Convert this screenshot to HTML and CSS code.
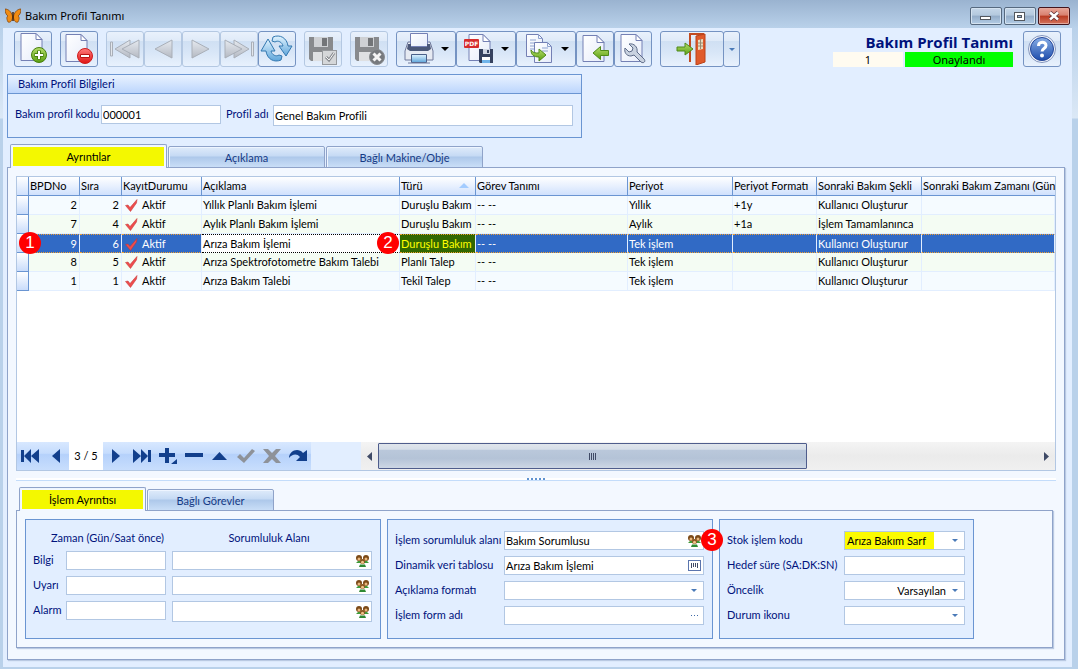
FILE: index.html
```
<!DOCTYPE html>
<html lang="tr">
<head>
  <meta charset="UTF-8">
  <meta name="viewport" content="width=device-width, initial-scale=1.0">
  <title>Bakım Profil Tanımı</title>
  <link rel="stylesheet" href="styles.css">
</head>
<body>
  <!-- shared icons and gradients -->
  <svg class="sprite" width="0" height="0" aria-hidden="true">
    <defs>
      <linearGradient id="g-gray" x1="0" y1="0" x2="0" y2="1"><stop offset="0" stop-color="#e6eaf0"/><stop offset="1" stop-color="#b4b9c2"/></linearGradient>
      <linearGradient id="g-green" x1="0" y1="0" x2="0" y2="1"><stop offset="0" stop-color="#b5de6b"/><stop offset="1" stop-color="#5a9e10"/></linearGradient>
      <linearGradient id="g-red" x1="0" y1="0" x2="0" y2="1"><stop offset="0" stop-color="#ff7b7b"/><stop offset="1" stop-color="#e01414"/></linearGradient>
      <linearGradient id="g-blue" x1="0" y1="0" x2="0" y2="1"><stop offset="0" stop-color="#e2f4ff"/><stop offset="1" stop-color="#5ea5da"/></linearGradient>
      <linearGradient id="g-help" x1="0" y1="0" x2="0" y2="1"><stop offset="0" stop-color="#88aee6"/><stop offset="1" stop-color="#1d4cab"/></linearGradient>
      <linearGradient id="g-page" x1="0" y1="0" x2="1" y2="1"><stop offset="0" stop-color="#ffffff"/><stop offset="1" stop-color="#e6ecfa"/></linearGradient>
    </defs>
    <symbol id="i-tri" viewBox="0 0 32 32">
      <path d="M25 7v18L8 16z" fill="url(#g-gray)" stroke="#a9afb8"/>
    </symbol>
    <symbol id="i-first" viewBox="0 0 32 32">
      <path d="M1.500 9h2v14h-2z" fill="#e2e6ec" stroke="#a9afb8"/>
      <path d="M21 7v18L6 16z" fill="url(#g-gray)" stroke="#a9afb8"/>
      <path d="M30 7v18L13 16z" fill="url(#g-gray)" stroke="#a9afb8"/>
    </symbol>
    <symbol id="i-floppy" viewBox="0 0 32 32">
      <path d="M2 4h24v24H4l-2-2z" fill="#888a8d"/>
      <path d="M7 4h14v10H7z" fill="#cfd1d4"/><path d="M15 5h5v8h-5z" fill="#737578"/>
      <path d="M6 19h16v9H6z" fill="#dfe0e2"/>
    </symbol>
    <symbol id="i-people" viewBox="0 0 13 12">
      <path d="M0 8l2-2h3l1 2zM7 8l1-2h3l2 2z" fill="#3f9a3a"/>
      <circle cx="3" cy="3" r="3" fill="#7c4a18"/><circle cx="3" cy="4" r="1.500" fill="#e9b77c"/>
      <circle cx="10" cy="3" r="3" fill="#7c4a18"/><circle cx="10" cy="4" r="1.500" fill="#e9b77c"/>
      <circle cx="6.500" cy="6.500" r="2.500" fill="#8b561f"/><circle cx="6.500" cy="7.300" r="1.500" fill="#f0c48c"/>
      <path d="M3 12l1-2.500h5l1 2.500z" fill="#2f8a34"/>
    </symbol>
    <symbol id="i-check" viewBox="0 0 13 13">
      <path d="M.5 6.500l2.500-.5 2 2.500 7-8-.5 3.500-6 8.500z" fill="#ee4d4d" stroke="#c03030" stroke-width=".5"/>
    </symbol>
    <symbol id="i-arrow" viewBox="0 0 18 14">
      <path d="M1 5h8V1l8 6-8 6V9H1z" fill="url(#g-green)" stroke="#4e8a1a"/>
    </symbol>
  </svg>

  <div class="window">
    <header class="titlebar">
      <svg class="logo" width="16" height="16" viewBox="0 0 16 16">
        <path d="M7.500 8C6 3 3 1 0 1c0 3 1 6 3 7-2 1-1 4 0 6 2 1 4-1 4.500-4z" fill="#f08c14" stroke="#7a3c05" stroke-width=".7"/>
        <path d="M8.500 8C10 3 13 1 16 1c0 3-1 6-3 7 2 1 1 4 0 6-2 1-4-1-4.500-4z" fill="#f08c14" stroke="#7a3c05" stroke-width=".7"/>
        <path d="M8 4v9" stroke="#4a2505" stroke-width="1.500"/>
      </svg>
      <h1>Bakım Profil Tanımı</h1>
      <div class="window-buttons">
        <button type="button" aria-label="Küçült"><svg width="30" height="16" viewBox="0 0 30 16"><rect x="9.500" y="8.500" width="10" height="3" fill="#fff" stroke="#53585f"/></svg></button>
        <button type="button" aria-label="Büyüt"><svg width="30" height="16" viewBox="0 0 30 16"><rect x="9.500" y="4.500" width="10" height="8" fill="#fff" stroke="#53585f"/><rect x="12.500" y="7.500" width="4" height="2" fill="#9db5d3" stroke="#53585f"/></svg></button>
        <button type="button" class="close" aria-label="Kapat"><svg width="30" height="16" viewBox="0 0 30 16"><path d="M11 4.500l8 7M19 4.500l-8 7" stroke="#5a3038" stroke-width="4"/><path d="M11 4.500l8 7M19 4.500l-8 7" stroke="#fff" stroke-width="2.500"/></svg></button>
      </div>
    </header>

    <main class="content">
      <div class="toolbar">
        <button type="button" class="tool" aria-label="Yeni"><svg width="32" height="32" viewBox="0 0 32 32"><path d="M4 .5h15l6 6v21H4z" fill="url(#g-page)" stroke="#7480b4"/><path d="M19 .5v6h6z" fill="#fff" stroke="#7480b4"/><circle cx="22" cy="22" r="7.500" fill="url(#g-green)" stroke="#47800f"/><path d="M22 17.500v9M17.500 22h9" stroke="#47800f" stroke-width="4"/><path d="M22 18v8M18 22h8" stroke="#fff" stroke-width="2"/></svg></button>
        <button type="button" class="tool gap" aria-label="Sil"><svg width="32" height="32" viewBox="0 0 32 32"><path d="M3 1.500h15l6 6v21H3z" fill="url(#g-page)" stroke="#7480b4"/><path d="M18 1.500v6h6z" fill="#fff" stroke="#7480b4"/><circle cx="22" cy="23" r="7.500" fill="url(#g-red)" stroke="#d01c1c"/><path d="M17.500 21.500h9v3h-9z" fill="#fff" stroke="#b81414"/></svg></button>
        <button type="button" class="tool gap" disabled aria-label="İlk"><svg width="32" height="32"><use href="#i-first"/></svg></button>
        <button type="button" class="tool" disabled aria-label="Önceki"><svg width="32" height="32"><use href="#i-tri"/></svg></button>
        <button type="button" class="tool" disabled aria-label="Sonraki"><svg class="flip" width="32" height="32"><use href="#i-tri"/></svg></button>
        <button type="button" class="tool" disabled aria-label="Son"><svg class="flip" width="32" height="32"><use href="#i-first"/></svg></button>
        <button type="button" class="tool" aria-label="Yenile"><svg width="34" height="32" viewBox="0 0 34 32"><g fill="url(#g-blue)" stroke="#3378b0" stroke-linejoin="round"><path d="M13 4c7-3 14 1 15 9l4 0-6 10-7-10h4c-1-4-5-6-8-4l-3-1z"/><path d="M21 27c-7 3-14-1-15-9H1L8 6l7 12h-4c1 4 5 6 8 4l3 1z"/></g></svg></button>
        <button type="button" class="tool gap" disabled aria-label="Kaydet"><svg width="32" height="32" viewBox="0 0 32 32"><use href="#i-floppy"/><rect x="15.500" y="17.500" width="14" height="14" fill="#d5d7d9" stroke="#96999d"/><path d="M19 24l3 3 5-7" fill="none" stroke="#888b90" stroke-width="3"/><path d="M19 24l3 3 5-7" fill="none" stroke="#f6f6f6"/></svg></button>
        <button type="button" class="tool gap" disabled aria-label="İptal"><svg width="32" height="32" viewBox="0 0 32 32"><use href="#i-floppy"/><circle cx="24" cy="24" r="7.500" fill="#777a7e" stroke="#898c90"/><path d="M20.500 20.500l7 7M27.500 20.500l-7 7" stroke="#f4f4f4" stroke-width="3"/></svg></button>
        <button type="button" class="tool wide gap" aria-label="Yazdır"><svg width="32" height="32" viewBox="0 0 32 32"><path d="M5 9h22l3 9v9H2v-9z" fill="#e6eaf2" stroke="#707a9c"/><path d="M7.500.5h17v13h-17z" fill="url(#g-page)" stroke="#7480b4"/><path d="M5 11h3v3h16v-3h3l1 5-3 2H7l-3-2z" fill="#4b5878"/><path d="M8.500 21.500h15v8h-15z" fill="url(#g-blue)" stroke="#4a5f88"/><path d="M5 30h22" stroke="#707a9c"/></svg><i class="caret"></i></button>
        <button type="button" class="tool wide" aria-label="PDF kaydet"><svg width="32" height="32" viewBox="0 0 32 32"><path d="M6 1.500h14l7 7v19H6z" fill="url(#g-page)" stroke="#7480b4"/><path d="M20 1.500v7h7z" fill="#fff" stroke="#7480b4"/><rect x="1" y="6" width="15" height="9" rx="1" fill="#d62c2c"/><text x="8.500" y="13" text-anchor="middle" class="pdf">PDF</text><path d="M16 16h14v14H17l-1-1z" fill="#36425f"/><path d="M20 16h7v5h-7z" fill="#cfd6e4"/><path d="M24 17h2v3h-2z" fill="#36425f"/><path d="M19 24h8v6h-8z" fill="#fff"/><path d="M19 27h8v3h-8z" fill="#6fb4ea"/></svg><i class="caret"></i></button>
        <button type="button" class="tool wide" aria-label="Kopyala"><svg width="32" height="32" viewBox="0 0 32 32"><path d="M3.500 1.500h12l4 4v18h-16z" fill="url(#g-page)" stroke="#7480b4"/><path d="M15.500 1.500v4h4M7 7h6M7 10h8M7 13h8M7 16h4" fill="none" stroke="#8fa3d0"/><path d="M11.500 9.500h13l4 4v16h-17z" fill="url(#g-page)" stroke="#7480b4"/><path d="M24.500 9.500v4h4M19 15h6M19 18h6" fill="none" stroke="#8fa3d0"/><path d="M8 17c2 3 4 3 8 3v-4l7 6-7 6v-4c-5 0-8-2-8-7z" fill="url(#g-green)" stroke="#4e8a1a"/></svg><i class="caret"></i></button>
        <button type="button" class="tool" aria-label="Geri aktar"><svg width="32" height="32" viewBox="0 0 32 32"><path d="M4 2.500h14l7 7v19H4z" fill="url(#g-page)" stroke="#7480b4"/><path d="M18 2.500v7h7z" fill="#fff" stroke="#7480b4"/><path d="M29.500 17.500h-8v-4L14 20l7.500 6.500v-4h8z" fill="url(#g-green)" stroke="#4e8a1a"/></svg></button>
        <button type="button" class="tool" aria-label="Ayarlar"><svg width="32" height="32" viewBox="0 0 32 32"><path d="M4 1.500h15l6 6v21H4z" fill="url(#g-page)" stroke="#7480b4"/><path d="M19 1.500v6h6z" fill="#fff" stroke="#7480b4"/><path d="M12 11l4 4-1 3-3 1-4-4c-1 4 1 8 6 8l3-1 7 7c3 2 5-1 3-3l-7-7c1-5-3-9-8-8z" fill="#c9d2e0" stroke="#5d6b88"/></svg></button>
        <button type="button" class="tool exit gap" aria-label="Çıkış"><svg width="32" height="32" viewBox="0 0 32 32"><path d="M14 29V1h14" fill="none" stroke="#c24a20" stroke-width="2"/><path d="M20 3l9-2v28l-9 3z" fill="#e05a2b" stroke="#b9431a"/><path d="M22 7l5-1v10l-5 1z" fill="#e9dcc0"/><path d="M24.500 6v10M22 10h5M22 13h5" stroke="#9a8a70"/><use href="#i-arrow" x="0" y="9" width="18" height="14"/></svg></button>
        <button type="button" class="tool drop" aria-label="Çıkış seçenekleri"><i class="caret small"></i></button>

        <div class="doc-info">
          <strong>Bakım Profil Tanımı</strong>
          <div class="status">
            <span class="number">1</span>
            <span class="approved">Onaylandı</span>
          </div>
        </div>
        <button type="button" class="tool" aria-label="Yardım"><svg width="32" height="32" viewBox="0 0 32 32"><circle cx="16" cy="16" r="13.500" fill="#f4f7fc" stroke="#8294bd"/><circle cx="16" cy="16" r="11.500" fill="url(#g-help)" stroke="#24479a"/><path d="M12.500 13c0-5 7.500-5 7.500-.5 0 3-4 3-4 6" fill="none" stroke="#fff" stroke-width="3"/><circle cx="16" cy="22.500" r="2" fill="#fff"/></svg></button>
      </div>

      <section class="profile">
        <h2>Bakım Profil Bilgileri</h2>
        <div class="profile-fields">
          <label for="kod">Bakım profil kodu</label>
          <input class="box code" type="text" id="kod" value="000001">
          <label for="ad">Profil adı</label>
          <input class="box name" type="text" id="ad" value="Genel Bakım Profili">
        </div>
      </section>

      <nav class="tabs">
        <button type="button" class="tab active"><span>Ayrıntılar</span></button>
        <button type="button" class="tab">Açıklama</button>
        <button type="button" class="tab">Bağlı Makine/Obje</button>
      </nav>
      <section class="page">
        <div class="grid">
          <table>
            <colgroup>
              <col class="c-mark"><col class="c-no"><col class="c-order"><col class="c-state"><col class="c-desc"><col class="c-type">
              <col class="c-task"><col class="c-period"><col class="c-format"><col class="c-next"><col>
            </colgroup>
            <thead>
              <tr>
                <th></th><th>BPDNo</th><th>Sıra</th><th>KayıtDurumu</th><th>Açıklama</th><th class="sorted">Türü</th>
                <th>Görev Tanımı</th><th>Periyot</th><th>Periyot Formatı</th><th>Sonraki Bakım Şekli</th><th>Sonraki Bakım Zamanı (Gün</th>
              </tr>
            </thead>
            <tbody>
              <tr>
                <td></td><td class="num">2</td><td class="num">2</td><td><svg class="check" width="13" height="13"><use href="#i-check"/></svg>Aktif</td><td>Yıllık Planlı Bakım İşlemi</td><td>Duruşlu Bakım</td>
                <td>-- --</td><td>Yıllık</td><td>+1y</td><td>Kullanıcı Oluşturur</td><td></td>
              </tr>
              <tr>
                <td></td><td class="num">7</td><td class="num">4</td><td><svg class="check" width="13" height="13"><use href="#i-check"/></svg>Aktif</td><td>Aylık Planlı Bakım İşlemi</td><td>Duruşlu Bakım</td>
                <td>-- --</td><td>Aylık</td><td>+1a</td><td>İşlem Tamamlanınca</td><td></td>
              </tr>
              <tr class="selected">
                <td class="anchor"><b class="badge mark-one">1</b></td><td class="num">9</td><td class="num">6</td><td><svg class="check" width="13" height="13"><use href="#i-check"/></svg>Aktif</td><td class="focused">Arıza Bakım İşlemi</td><td class="anchor marked">Duruşlu Bakım<b class="badge mark-two">2</b></td>
                <td>-- --</td><td>Tek işlem</td><td></td><td>Kullanıcı Oluşturur</td><td></td>
              </tr>
              <tr>
                <td></td><td class="num">8</td><td class="num">5</td><td><svg class="check" width="13" height="13"><use href="#i-check"/></svg>Aktif</td><td>Arıza Spektrofotometre Bakım Talebi</td><td>Planlı Talep</td>
                <td>-- --</td><td>Tek işlem</td><td></td><td>Kullanıcı Oluşturur</td><td></td>
              </tr>
              <tr>
                <td></td><td class="num">1</td><td class="num">1</td><td><svg class="check" width="13" height="13"><use href="#i-check"/></svg>Aktif</td><td>Arıza Bakım Talebi</td><td>Tekil Talep</td>
                <td>-- --</td><td>Tek işlem</td><td></td><td>Kullanıcı Oluşturur</td><td></td>
              </tr>
            </tbody>
          </table>

          <div class="grid-footer">
            <div class="navigator">
              <button type="button" aria-label="İlk kayıt"><svg width="20" height="16" viewBox="0 0 20 16"><path d="M1 2h3v12H1zM11 1v14L4 8zM19 1v14l-8-7z"/></svg></button>
              <button type="button" aria-label="Önceki kayıt"><svg width="20" height="16" viewBox="0 0 20 16"><path d="M14 1v14L6 8z"/></svg></button>
              <span class="position">3 / 5</span>
              <button type="button" aria-label="Sonraki kayıt"><svg width="20" height="16" viewBox="0 0 20 16"><path d="M6 1v14l8-7z"/></svg></button>
              <button type="button" aria-label="Son kayıt"><svg width="20" height="16" viewBox="0 0 20 16"><path d="M16 2h3v12h-3zM9 1v14l7-7zM1 1v14l8-7z"/></svg></button>
              <button type="button" aria-label="Ekle"><svg width="20" height="16" viewBox="0 0 20 16"><path d="M1 5h6V0h4v5h6v4h-6v6H7V9H1zM19 11v5h-6z"/></svg></button>
              <button type="button" aria-label="Çıkar"><svg width="20" height="16" viewBox="0 0 20 16"><path d="M1 5h18v4H1z"/></svg></button>
              <button type="button" aria-label="Düzenle"><svg width="20" height="16" viewBox="0 0 20 16"><path d="M2 12h15L9.500 4z"/></svg></button>
              <button type="button" disabled aria-label="Onayla"><svg width="20" height="16" viewBox="0 0 20 16"><path d="M1 9l3-3 4 4 8-9 3 2L8 15z"/></svg></button>
              <button type="button" disabled aria-label="Vazgeç"><svg width="20" height="16" viewBox="0 0 20 16"><path d="M1 1h5l4 4 4-4h5l-6 7 6 7h-5l-4-4-4 4H1l6-7z"/></svg></button>
              <button type="button" aria-label="Yenile"><svg width="20" height="16" viewBox="0 0 20 16"><path d="M1 10C1 3 10-1 15 5l4-3v11H8l4-4C9 5 4 6 1 10z"/></svg></button>
            </div>
            <div class="scrollbar">
              <button type="button" aria-label="Sola kaydır"><svg width="5" height="9" viewBox="0 0 5 9"><path d="M5 0v9L0 4.500z" fill="#3f4a66"/></svg></button>
              <div class="track"><div class="thumb"><i></i><i></i><i></i><i></i></div></div>
              <button type="button" aria-label="Sağa kaydır"><svg width="5" height="9" viewBox="0 0 5 9"><path d="M0 0v9l5-4.500z" fill="#3f4a66"/></svg></button>
            </div>
          </div>
        </div>

        <div class="splitter"><i></i><i></i><i></i><i></i><i></i></div>

        <nav class="tabs sub">
          <button type="button" class="tab active"><span>İşlem Ayrıntısı</span></button>
          <button type="button" class="tab">Bağlı Görevler</button>
        </nav>
        <div class="detail">
          <fieldset class="notify">
            <span class="head time">Zaman (Gün/Saat önce)</span>
            <span class="head">Sorumluluk Alanı</span>

            <label for="bilgi">Bilgi</label>
            <input class="box" type="text" id="bilgi">
            <div class="box field"><input type="text" aria-label="Bilgi sorumluluk alanı"><button type="button" aria-label="Seç"><svg width="13" height="12"><use href="#i-people"/></svg></button></div>

            <label for="uyari">Uyarı</label>
            <input class="box" type="text" id="uyari">
            <div class="box field"><input type="text" aria-label="Uyarı sorumluluk alanı"><button type="button" aria-label="Seç"><svg width="13" height="12"><use href="#i-people"/></svg></button></div>

            <label for="alarm">Alarm</label>
            <input class="box" type="text" id="alarm">
            <div class="box field tall"><input type="text" aria-label="Alarm sorumluluk alanı"><button type="button" aria-label="Seç"><svg width="13" height="12"><use href="#i-people"/></svg></button></div>
          </fieldset>

          <fieldset class="form task">
            <label for="sorumlu">İşlem sorumluluk alanı</label>
            <div class="box field anchor"><input type="text" id="sorumlu" value="Bakım Sorumlusu"><button type="button" aria-label="Seç"><svg width="13" height="12"><use href="#i-people"/></svg></button><b class="badge mark-three">3</b></div>

            <label for="tablo">Dinamik veri tablosu</label>
            <div class="box field"><input type="text" id="tablo" value="Arıza Bakım İşlemi"><button type="button" aria-label="Tablo seç"><svg width="13" height="11" viewBox="0 0 13 11"><rect x=".5" y=".5" width="12" height="10" fill="#fff" stroke="#5b75ae"/><path d="M3.500 3v5M5.500 3v4M7.500 3v4M9.500 3v5" stroke="#3f4a66"/></svg></button></div>

            <label for="format">Açıklama formatı</label>
            <div class="box combo"><select id="format"><option></option></select></div>

            <label for="form">İşlem form adı</label>
            <div class="box field"><input type="text" id="form"><button type="button" class="dots" aria-label="Gözat"><i></i><i></i><i></i></button></div>
          </fieldset>

          <fieldset class="form stock">
            <label for="stok">Stok işlem kodu</label>
            <div class="box combo"><select id="stok" class="highlight"><option>Arıza Bakım Sarf</option></select></div>

            <label for="sure">Hedef süre (SA:DK:SN)</label>
            <input class="box" type="text" id="sure">

            <label for="oncelik">Öncelik</label>
            <div class="box combo"><select id="oncelik" class="right"><option>Varsayılan</option></select></div>

            <label for="ikon">Durum ikonu</label>
            <div class="box combo"><select id="ikon"><option></option></select></div>
          </fieldset>
        </div>
      </section>
    </main>
  </div>
</body>
</html>
```
FILE: styles.css
```
* {
  box-sizing: border-box;
}

body {
  margin: 0;
  font-family: Lato, "Noto Sans", sans-serif;
  font-size: 11px;
  line-height: 14px;
  color: #000;
}

button,
input,
select {
  font: inherit;
  color: inherit;
  margin: 0;
  padding: 0;
}

button {
  cursor: pointer;
}

svg {
  display: block;
}

.sprite {
  position: absolute;
}

/* window frame */
.window {
  display: flex;
  flex-direction: column;
  min-height: 100vh;
  padding: 0 6px 2px 3px;
  background: linear-gradient(#9ab3d0, #b9d1ea 28px, #dbe8f6 118px, #b9d1ea 119px);
}

.titlebar {
  display: flex;
  align-items: center;
  height: 28px;
  padding: 4px 0 0 2px;
}

.titlebar h1 {
  margin: 0 auto 0 4px;
  font-family: "Noto Sans", "Open Sans", sans-serif;
  font-size: 11px;
  font-weight: normal;
  line-height: 16px;
}

.window-buttons {
  display: flex;
  gap: 2px;
  padding-right: 2px;
}

.window-buttons button {
  height: 18px;
  width: 32px;
  border: 1px solid #56697f;
  border-radius: 2px;
  background: linear-gradient(#c6d7e9, #b4c9de 45%, #93acc8 50%, #b4cde6);
  box-shadow: inset 0 0 0 1px #d4e2f0;
}

.window-buttons .close {
  border-color: #43141c;
  background: linear-gradient(#e8a598, #d8806f 45%, #b93a22 50%, #d4735c);
  box-shadow: inset 0 0 0 1px #e3a79b;
}

.content {
  display: flex;
  flex-direction: column;
  flex: 1;
  padding: 3px 7px 7px 4px;
  background: #e2eeff;
}

/* toolbar */
.toolbar {
  display: flex;
  padding: 0 4px 0 7px;
}

.tool {
  display: flex;
  flex: none;
  align-items: center;
  justify-content: center;
  width: 38px;
  height: 36px;
  border: 1px solid #7593c2;
  border-radius: 3px;
  background: linear-gradient(#e9f1fc, #dfeaf8 26%, #d0e0f3 28%, #d8e6f7 60%, #e8f1fd);
}

.tool:disabled {
  border-color: #b4c8e2;
}

.gap {
  margin-left: 8px;
}

.wide {
  width: 60px;
  justify-content: flex-start;
  gap: 6px;
  padding-left: 6px;
}

.exit {
  width: 64px;
}

.drop {
  width: 17px;
  margin-left: -1px;
}

.flip {
  transform: scaleX(-1);
}

.caret {
  border: 4px solid transparent;
  border-top-color: #000;
  border-bottom: 0;
}

.caret.small {
  border-width: 3px 3px 0;
  border-top-color: #4a7ab8;
}

.pdf {
  font: bold 6px "DejaVu Sans", sans-serif;
  fill: #fff;
}

.doc-info {
  margin: 1px 10px 0 auto;
  text-align: right;
}

.doc-info strong {
  display: block;
  font-family: "Open Sans", "Noto Sans", sans-serif;
  font-size: 15px;
  line-height: 20px;
  color: #00127c;
}

.status {
  display: flex;
  justify-content: flex-end;
  gap: 2px;
  text-align: center;
  line-height: 15px;
  font-family: "Noto Sans", "Open Sans", sans-serif;
}

.number {
  width: 70px;
  background: #fffbf0;
}

.approved {
  width: 108px;
  background: #0f0;
}

/* profile box */
.profile {
  width: 575px;
  margin-top: 7px;
  border: 1px solid #6a95d2;
  color: #00127c;
}

.profile h2 {
  margin: 0;
  height: 19px;
  padding-left: 10px;
  border-bottom: 1px solid #6a95d2;
  font-size: 11px;
  font-weight: normal;
  line-height: 18px;
  background: linear-gradient(#e9f2ff, #bcd6fd);
}

.profile-fields {
  display: grid;
  grid-template-columns: 86px 120px 52px 1fr;
  align-items: start;
  height: 43px;
  padding: 11px 8px 0 7px;
}

.profile-fields label {
  line-height: 18px;
  white-space: nowrap;
}

.box {
  width: 100%;
  height: 19px;
  border: 1px solid #b2c7e3;
  padding: 0 1px;
  background: #fff;
  color: #000;
  outline: none;
}

.code + label {
  padding-left: 5px;
}

.name {
  height: 21px;
}

/* tabs */
.tabs {
  display: flex;
  align-items: flex-end;
  gap: 1px;
  height: 24px;
  margin: 6px 0 -1px 3px;
  z-index: 1;
}

.tab {
  width: 157px;
  height: 22px;
  padding: 2px 0 0;
  border: 1px solid #8fa3c9;
  border-radius: 2px 2px 0 0;
  box-shadow: inset 1px 1px #eef5ff;
  background: linear-gradient(#dfebfa, #c5daf4 45%, #adc8ea 50%, #c9def7);
  color: #153a85;
}

.tab.active {
  height: 24px;
  padding: 1px 2px 2px;
  border-bottom: 0;
  background: #f3f8ff;
  color: #000;
}

.tab.active span {
  display: block;
  height: 19px;
  line-height: 20px;
  background: #f4f800;
}

/* tab page */
.page {
  display: flex;
  flex-direction: column;
  flex: 1;
  padding: 8px 8px 11px;
  border: 1px solid #8fa3c9;
  box-shadow: 1px 1px 1px #b9c9e2;
  background: #f3f8ff;
}

.grid {
  display: flex;
  flex-direction: column;
  flex: 1;
  min-width: 0;
  border: 1px solid #b2c7e3;
  background: #fff;
}

table {
  width: 100%;
  table-layout: fixed;
  border-collapse: separate;
  border-spacing: 0;
}

.c-mark { width: 12px; }
.c-no { width: 51px; }
.c-order { width: 42px; }
.c-state { width: 80px; }
.c-desc { width: 198px; }
.c-type { width: 76px; }
.c-task { width: 152px; }
.c-period { width: 105px; }
.c-format { width: 84px; }
.c-next { width: 105px; }

th,
td {
  height: 19px;
  padding: 0 1px;
  text-align: left;
  font-weight: normal;
  line-height: 18px;
  white-space: nowrap;
  overflow: hidden;
}

th {
  border-right: 1px solid #6a95d2;
  border-bottom: 1px solid #6a95d2;
  background: linear-gradient(#fff, #d0e1fd);
}

th:last-child {
  padding-right: 0;
  border-right: 0;
  overflow: visible;
}

.sorted::after {
  content: "";
  float: right;
  margin: 6px 5px 0 0;
  border: 5px solid transparent;
  border-top: 0;
  border-bottom-color: #a3ccff;
}

td {
  border-right: 1px solid #e2eeff;
  border-bottom: 1px solid #e2eeff;
  background: #f5fbff;
}

tr:nth-child(even) td {
  background: #f4fcf3;
}

tbody td:first-child,
tbody tr:nth-child(even) td:first-child {
  border-color: #6a95d2;
  background: linear-gradient(#fff, #c9dcfb);
}

.num {
  padding-right: 2px;
  text-align: right;
}

.check {
  display: inline-block;
  margin: 0 4px 0 2px;
  vertical-align: -3px;
}

.selected td {
  border-top: 1px dotted #f0a030;
  border-bottom: 1px dotted #f0a030;
  background: #316ac5;
  color: #fff;
  line-height: 16px;
}

.selected td:first-child {
  border-top: 0;
  border-bottom-style: solid;
}

.selected .focused {
  border-top-color: #000;
  border-bottom-color: #000;
  background: #fff;
  color: #000;
}

.selected .marked {
  background: #326800;
  color: #ff0;
}

/* numbered markers lie over the screen */
.anchor {
  position: relative;
  overflow: visible;
}

.badge {
  position: absolute;
  z-index: 2;
  width: 22px;
  height: 22px;
  border-radius: 50%;
  background: #f00;
  color: #fff;
  font: 17px/22px "Liberation Sans", Arial, sans-serif;
  text-align: center;
}

.mark-one {
  left: 2px;
  top: -2px;
}

.mark-two {
  left: -23px;
  top: -3px;
}

.mark-three {
  right: -20px;
  top: -3px;
}

/* record navigator and scrollbar */
.grid-footer {
  display: flex;
  height: 28px;
  margin-top: auto;
  background: #e2eeff;
}

.navigator {
  display: flex;
  align-items: stretch;
  width: 294px;
  background: linear-gradient(#d8e8ff, #c5dcfd 40%, #b5d1fb 45%, #c8defd);
}

.navigator button {
  display: flex;
  align-items: center;
  justify-content: center;
  width: 26px;
  border: 0;
  background: none;
}

.navigator svg {
  fill: #123f8c;
}

.navigator :disabled svg {
  fill: #8e9299;
}

.position {
  width: 34px;
  line-height: 28px;
  text-align: center;
  background: #fff;
}

.scrollbar {
  display: flex;
  flex: 1;
  margin-left: 50px;
  background: linear-gradient(#f4f4f4, #ebebeb 50%, #f0f0f0);
}

.scrollbar button {
  display: flex;
  align-items: center;
  justify-content: center;
  width: 17px;
  border: 0;
  background: none;
}

.track {
  flex: 1;
  padding: 1px 0;
}

.thumb {
  display: flex;
  align-items: center;
  justify-content: center;
  gap: 1px;
  width: 65%;
  height: 26px;
  border: 1px solid #4f5d8c;
  border-radius: 1px;
  background: linear-gradient(#e0e5eb, #d6dee8 22%, #bac8db 26%, #b4c3d7 60%, #cdd7e5);
}

.thumb i {
  width: 1px;
  height: 7px;
  background: #3f4a66;
}

.splitter {
  display: flex;
  justify-content: center;
  gap: 2px;
  height: 3px;
  margin: 7px 0 0;
  border-bottom: 1px solid #c3dcfa;
  background: #fff;
}

.splitter i {
  width: 2px;
  height: 2px;
  background: #5f92d0;
}

/* detail tabs */
.sub {
  margin-top: 6px;
}

.sub .tab {
  width: 127px;
}

.detail {
  display: flex;
  gap: 6px;
  margin-right: 3px;
  padding: 8px;
  border: 1px solid #8fa3c9;
  box-shadow: 1px 1px 1px #b9c9e2;
}

fieldset {
  display: grid;
  align-content: start;
  row-gap: 6px;
  min-width: 0;
  height: 120px;
  margin: 0;
  padding: 11px 8px 0 7px;
  border: 1px solid #6a95d2;
  background: #e2eeff;
  color: #00127c;
}

fieldset label {
  line-height: 18px;
  white-space: nowrap;
}

.notify {
  grid-template-columns: 33px 100px 206px;
  width: 356px;
}

.notify .field {
  width: 200px;
  margin-left: 6px;
}

.head {
  text-align: center;
  white-space: nowrap;
}

.time {
  grid-column: span 2;
  padding-left: 16px;
}

.task {
  grid-template-columns: 109px 1fr;
  width: 326px;
}

.stock {
  grid-template-columns: 117px 1fr;
  width: 255px;
}

.field {
  display: flex;
  align-items: center;
}

.field input {
  flex: 1;
  min-width: 0;
  height: 17px;
  border: 0;
  background: none;
  outline: none;
}

.field button {
  margin-right: 1px;
  border: 0;
  background: none;
}

.tall {
  height: 21px;
}

.dots {
  display: flex;
  gap: 2px;
  padding: 0 3px;
}

.dots i {
  width: 1px;
  height: 1px;
  background: #3f6aa8;
}

.combo {
  display: flex;
  align-items: center;
  padding: 0;
}

.combo select {
  flex: 1;
  height: 17px;
  padding: 0 2px;
  border: 0;
  appearance: none;
  background: none;
  outline: none;
}

.combo::after {
  content: "";
  margin: 0 6px 0 4px;
  border: 3px solid transparent;
  border-top-color: #4a7ab8;
  border-bottom: 0;
}

.combo .right {
  text-align-last: right;
}

.combo .highlight {
  background: linear-gradient(90deg, #fbfb00 89px, #fff 89px);
}
```
